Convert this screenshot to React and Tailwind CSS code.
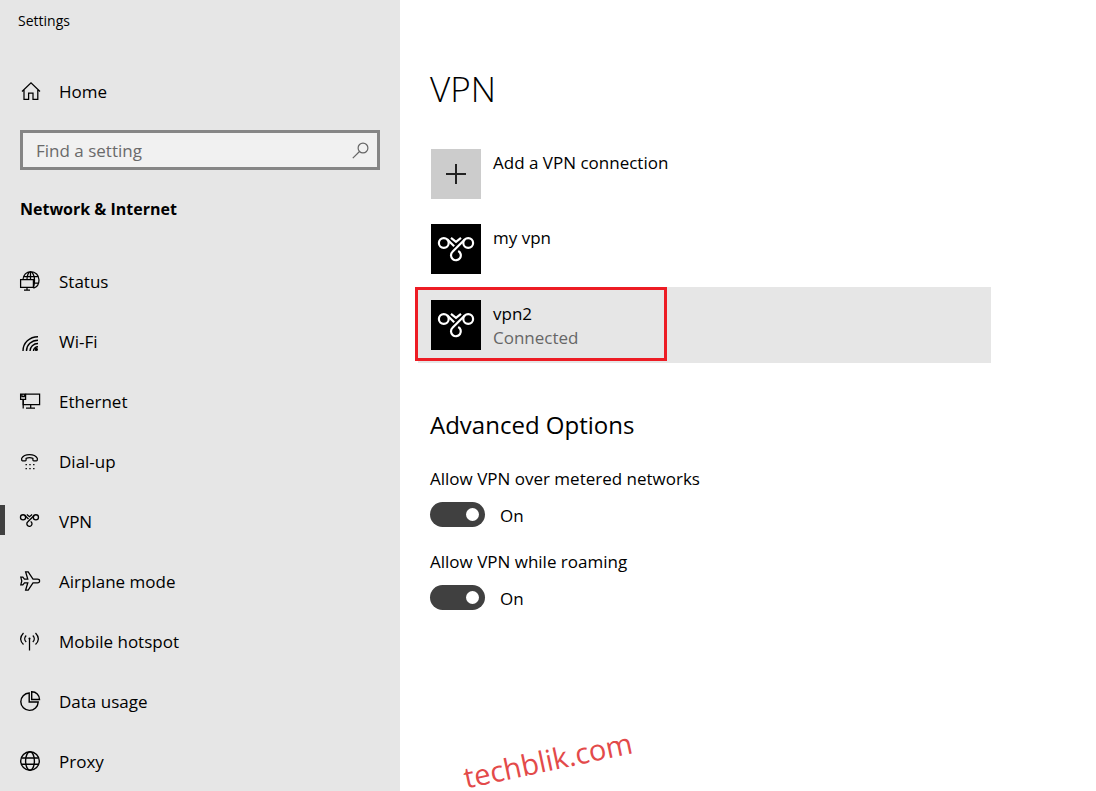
import React, { useState } from 'react';

const iconProps = {
  className: 'h-5 w-5 shrink-0 overflow-visible',
  viewBox: '0 0 20 20',
  fill: 'none',
  stroke: 'currentColor',
  strokeWidth: 1.25,
  'aria-hidden': true
};

const HomeIcon = () => (
  <svg {...iconProps}>
    <path d="M2 10.5 11 1.8l9 8.7M4 9v9.4h4.6v-6.2h4.4v6.2h4.8V9" />
  </svg>
);

const StatusIcon = () => (
  <svg {...iconProps}>
    <path d="M3 8.500C3.200 4 6.500.5 10.500.5c5 0 8.500 3.700 8.500 8.500 0 4.400-2.500 7.300-5.500 8.200M4 5.500h14.300M14 12h4.500M7 8.500C7 3.500 9 .5 10.500.5S14.500 4 14.500 9c0 3-.3 6-1.500 8M10.500.5v8" />
    <path d="M.6 8.600h12.800v7.800H.6zM7 16.400v2.800M4 19.200h6" />
  </svg>
);

const WifiIcon = () => (
  <svg {...iconProps} strokeWidth={1.4}>
    <path d="M3 20C3 12 9.500 5.700 18 5.700M6.500 20C6.500 14 11.500 9.200 18 9.200M10 20c0-4.200 3.500-7.500 8-7.500M13.500 20c0-2.400 2-4.200 4.500-4.200" />
    <circle cx="16.300" cy="18.400" r="1.700" fill="currentColor" stroke="none" />
  </svg>
);

const EthernetIcon = () => (
  <svg {...iconProps}>
    <path d="M5.500 3h14.100v10.500H3.200V8.500M10.700 13.500v3.500M6 17h9" />
    <path d="M.6 3h5v5.300H.6zM2 3v2.500h2.300V3M3.200 8v9.500" />
  </svg>
);

const DialUpIcon = () => (
  <svg {...iconProps}>
    <path d="M1.700 9V7.200C3 4.800 6 3.500 9.500 3.500s6.500 1.300 7.800 3.700V9c0 .5-.3.800-.8.800h-2.800c-.5 0-.8-.3-.8-.8V7.300c-2-.8-4.800-.8-6.800 0V9c0 .5-.3.800-.8.800H2.500c-.5 0-.8-.3-.8-.8Z" />
    <path d="M5.500 13.700h9M5.500 17.700h9" strokeDasharray="1.400 2.400" />
  </svg>
);

// Three linked loops, used both in the sidebar and on the connection tiles
const VpnLoops = () => (
  <>
    <circle cx="12.800" cy="19" r="4.900" />
    <circle cx="37.200" cy="19" r="4.900" />
    <path d="M16.200 15.400l7 6.800" />
    <path d="M20 13.800l5 4 5-4" />
    <path d="M33.800 15.400 21.500 27.800a4.900 4.900 0 1 0 5.700-.8" />
  </>
);

const VpnIcon = () => (
  <svg {...iconProps} viewBox="7 7 38 38" strokeWidth={2.5}>
    <VpnLoops />
  </svg>
);

const AirplaneIcon = () => (
  <svg {...iconProps}>
    <path d="M5.600.8h2.600l4.800 7.400h4.500c1.200 0 2.100.8 2.100 1.800s-.9 1.800-2.100 1.800H13l-4.800 7.400H5.600l2.200-7.400H4.500l-1.700 2.100H.8l1-3.900-1-3.900h2l1.700 2.100h3.300Z" />
  </svg>
);

const HotspotIcon = () => (
  <svg {...iconProps}>
    <path d="M9.500 7v12.500M3.500 2c-3.600 3.800-3.600 8 0 11.500M6.200 4.500c-2 2-2 4.500 0 6.500M15.500 2c3.600 3.800 3.600 8 0 11.500M12.800 4.500c2 2 2 4.500 0 6.500" />
    <circle cx="9.500" cy="7.500" r="1" fill="currentColor" stroke="none" />
  </svg>
);

const DataUsageIcon = () => (
  <svg {...iconProps} strokeWidth={1.4}>
    <path d="M9.200 2a8.700 8.700 0 1 0 9 9H9.200Z" />
    <path d="M11.700.7v7.800h7.800C19.500 4 16.200.7 11.700.7Z" />
  </svg>
);

const ProxyIcon = () => (
  <svg {...iconProps} strokeWidth={1.4}>
    <circle cx="10" cy="10" r="9.300" />
    <ellipse cx="10" cy="10" rx="4.400" ry="9.300" />
    <path d="M1.500 7h17M1.500 13.200h17" />
  </svg>
);

const navItems = [
  { label: 'Status', icon: StatusIcon },
  { label: 'Wi-Fi', icon: WifiIcon },
  { label: 'Ethernet', icon: EthernetIcon },
  { label: 'Dial-up', icon: DialUpIcon },
  { label: 'VPN', icon: VpnIcon },
  { label: 'Airplane mode', icon: AirplaneIcon },
  { label: 'Mobile hotspot', icon: HotspotIcon },
  { label: 'Data usage', icon: DataUsageIcon },
  { label: 'Proxy', icon: ProxyIcon }
];

const Sidebar = () => {
  const [active, setActive] = useState('VPN');
  const [query, setQuery] = useState('');

  return (
    <aside className="w-[400px] shrink-0 bg-[#e6e6e6]">
      <p className="flex h-10 items-center pt-0.5 pl-[18px] text-sm">Settings</p>
      <a href="#home" className="mt-5 flex h-[62px] items-center gap-[19px] pl-5">
        <HomeIcon />
        <span className="pt-0.5">Home</span>
      </a>

      <div className="mx-5 mt-2 flex h-10 items-center border-3 border-[#868686] bg-[#f1f1f1] pr-2">
        <input
          type="text"
          aria-label="Find a setting"
          placeholder="Find a setting"
          value={query}
          onChange={(e) => setQuery(e.target.value)}
          className="min-w-0 flex-1 bg-transparent pt-0.5 pl-[13px] outline-none placeholder:text-[#6a6a6a]"
        />
        <svg className="h-[17px] w-[17px] text-[#666]" viewBox="0 0 17 17" fill="none" stroke="currentColor" strokeWidth="1.2" aria-hidden="true">
          <circle cx="11" cy="6" r="4.900" />
          <path d="M7.500 9.500.8 16.200" />
        </svg>
      </div>

      <h2 className="mt-6 flex h-[30px] items-center pl-5 text-base font-bold">Network &amp; Internet</h2>

      <nav className="mt-[26px]">
        {navItems.map(({ label, icon: Icon }) => (
          <a
            key={label}
            href={`#${label}`}
            onClick={() => setActive(label)}
            className="relative flex h-[60px] items-center gap-[19px] pt-px pl-5"
          >
            {active === label && <span className="absolute top-[15px] left-0 h-[30px] w-[5px] bg-[#404040]" />}
            <Icon />
            <span className="pt-0.5">{label}</span>
          </a>
        ))}
      </nav>
    </aside>
  );
};

const VpnTile = () => (
  <span className="h-[50px] w-[50px] shrink-0 bg-black text-white">
    <svg viewBox="0 0 50 50" fill="none" stroke="currentColor" strokeWidth="2.2" aria-hidden="true">
      <VpnLoops />
    </svg>
  </span>
);

const Toggle = ({ id, label }) => {
  const [on, setOn] = useState(true);

  return (
    <div className="mb-[23px]">
      <p id={id} className="leading-6">{label}</p>
      <div className="mt-[11px] flex h-[25px] items-center gap-[15px]">
        <button
          type="button"
          role="switch"
          aria-checked={on}
          aria-labelledby={id}
          onClick={() => setOn(!on)}
          className={`flex h-[25px] w-[55px] items-center rounded-full bg-[#404040] px-1.5 ${on ? 'justify-end' : 'justify-start'}`}
        >
          <span className="h-[13px] w-[13px] rounded-full bg-white" />
        </button>
        <span className="pt-0.5">{on ? 'On' : 'Off'}</span>
      </div>
    </div>
  );
};

const App = () => {
  return (
    <div className="relative flex min-h-screen overflow-hidden bg-white font-['Open_Sans',sans-serif] text-[17px] text-black">
      <Sidebar />

      <main className="min-w-0 flex-1 pt-[65px] pr-[105px] pl-[18px]">
        <h1 className="pl-3 text-[35px] leading-[48px] font-light">VPN</h1>

        <div className="mt-[23px]">
          <button type="button" className="flex h-[75px] w-full items-start gap-3 px-[13px] pt-[13px] text-left">
            <span className="flex h-[50px] w-[50px] shrink-0 items-center justify-center bg-[#cccccc]">
              <svg className="h-5 w-5" viewBox="0 0 20 20" stroke="#222" strokeWidth="2" aria-hidden="true">
                <path d="M10 0v20M0 10h20" />
              </svg>
            </span>
            <span className="pt-0.5 leading-6">Add a VPN connection</span>
          </button>

          <button type="button" className="flex h-[76px] w-full items-start gap-3 px-[13px] pt-[13px] text-left">
            <VpnTile />
            <span className="pt-0.5 leading-6">my vpn</span>
          </button>

          <button type="button" className="relative flex h-[76px] w-full items-start gap-3 bg-[#e6e6e6] px-[13px] pt-[13px] text-left">
            <VpnTile />
            <span className="flex flex-col pt-0.5 leading-6">
              <span>vpn2</span>
              <span className="text-[#666]">Connected</span>
            </span>
            <span className="absolute top-0 -left-[3px] h-[74px] w-[252px] border-3 border-[#ed1c24]" />
          </button>
        </div>

        <section className="mt-[46px] pl-3">
          <h2 className="text-2xl">Advanced Options</h2>
          <div className="mt-[26px]">
            <Toggle id="metered" label="Allow VPN over metered networks" />
            <Toggle id="roaming" label="Allow VPN while roaming" />
          </div>
        </section>
      </main>

      <span className="absolute top-[750px] left-[462px] -rotate-12 text-[29px] leading-5 font-medium text-[#e34a4a]">techblik.com</span>
    </div>
  );
};

export default App;
